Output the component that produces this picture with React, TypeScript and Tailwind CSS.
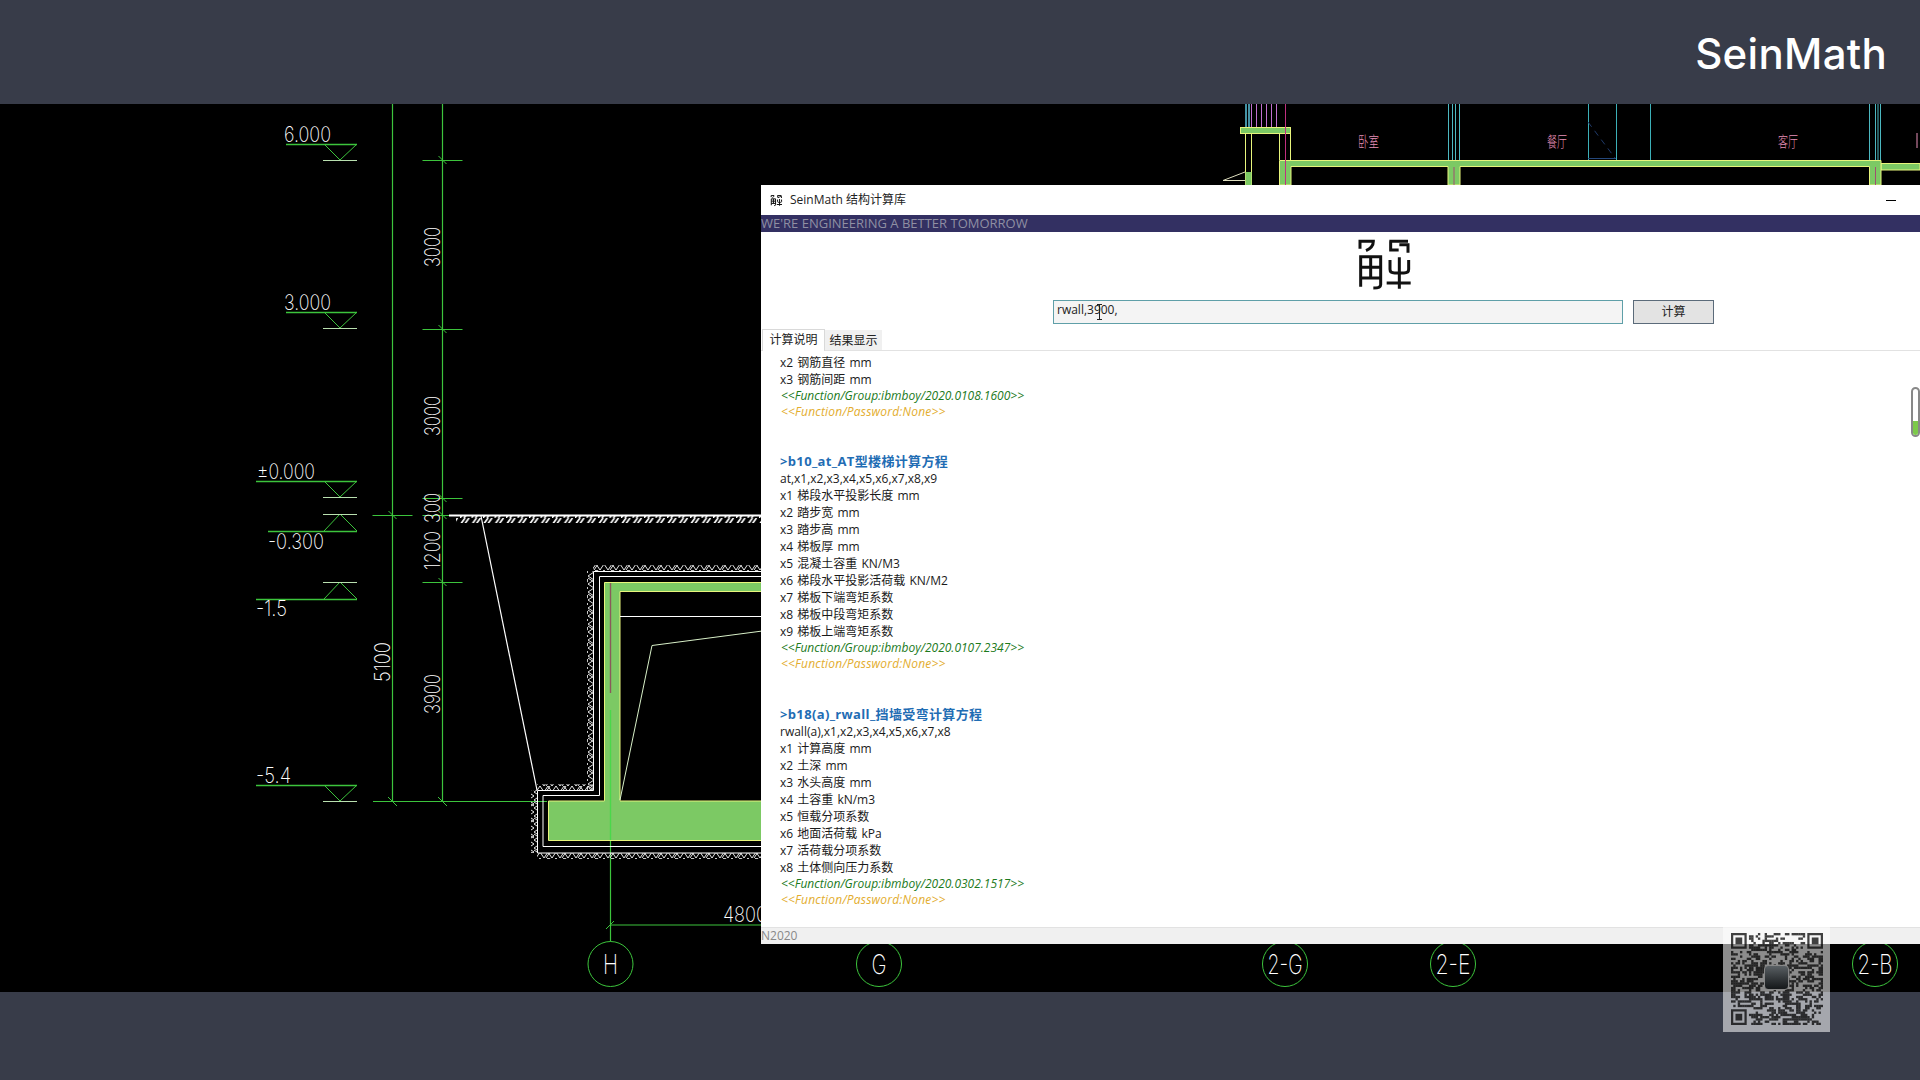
import React from 'react';

const uiFont = { fontFamily: '"Open Sans", "Noto Sans CJK SC", sans-serif' };
const LINE = '#3cc43c';
const WALL = '#7cc964';
const EDGE = '#e8f57c';

const CadText = ({x, y, w, size = 21, rot, children}: {x: number; y: number; w: number; size?: number; rot?: boolean; children: string}) => (
    <text x={x} y={y} textLength={w} lengthAdjust="spacingAndGlyphs" fontSize={size} fontWeight={200}
          fontFamily="Inter, sans-serif" fill="#fff" transform={rot ? `rotate(-90 ${x} ${y})` : undefined}>
        {children}
    </text>
);

// level marker: flat line + triangle, up=true when the point is at the top
const Level = ({y, left, up}: {y: number; left: number; up?: boolean}) => {
    const tip = up ? y - 17 : y + 16;
    return (
        <g fill="none" strokeWidth="1">
            <path d={`M${left} ${y + 0.5}H357`} stroke={LINE} strokeWidth="1.5"/>
            <path d={`M324 ${y}L340 ${tip}L357 ${y}`} stroke={LINE}/>
            <path d={`M323 ${tip + 0.5}H357`} stroke="#b9e0b0"/>
        </g>
    );
};

const Tick = ({x, y, half = 20}: {x: number; y: number; half?: number}) => (
    <g stroke={LINE}>
        <path d={`M${x - half} ${y + 0.5}H${x + half}`} strokeWidth="1.2"/>
        <path d={`M${x - 4} ${y - 4}L${x + 4} ${y + 4}`} strokeWidth="1"/>
    </g>
);

const Axis = ({x, label, w = 28}: {x: number; label: string; w?: number}) => (
    <g>
        <circle cx={x} cy={964} r={22.5} fill="#000" stroke={LINE} strokeWidth="1"/>
        <CadText x={x - w / 2} y={974} w={w} size={27}>{label}</CadText>
    </g>
);

const CadDrawing = () => (
    <svg className="w-full h-full block" viewBox="0 104 1920 888">
        <defs>
            <pattern id="groundHatch" width="11.5" height="7" patternUnits="userSpaceOnUse">
                <path d="M0 7L5 0M4 7L9 0" stroke="#fff" strokeWidth="1.7"/>
            </pattern>
            <pattern id="soilH" width="16" height="6" patternUnits="userSpaceOnUse">
                <path d="M0 6L4 0L8 6M8 6L12 0L16 6M2 6L6 0" stroke="#fff" strokeWidth="0.9" fill="none"/>
            </pattern>
            <pattern id="soilV" width="6" height="16" patternUnits="userSpaceOnUse">
                <path d="M0 0L6 4L0 8L6 12L0 16M0 2L6 6" stroke="#fff" strokeWidth="0.9" fill="none"/>
            </pattern>
        </defs>

        {/* dimension lines on the left */}
        <g stroke={LINE} strokeWidth="1.2">
            <path d="M392.5 104V801"/>
            <path d="M442.5 104V801"/>
            <path d="M373 801.5H547"/>
            <path d="M610.5 710V942"/>
            <path d="M610 925H770"/>
            <path d="M606 929L614 921" strokeWidth="1"/>
        </g>
        <Tick x={442.5} y={160}/>
        <Tick x={442.5} y={329}/>
        <Tick x={442.5} y={498}/>
        <Tick x={442.5} y={515}/>
        <Tick x={442.5} y={582}/>
        <Tick x={392.5} y={515}/>
        <path d="M388 797L397 806M438 797L447 806" stroke={LINE}/>

        <Level y={144} left={286}/>
        <Level y={312} left={286}/>
        <Level y={481} left={256}/>
        <Level y={531} left={268} up/>
        <Level y={599} left={256} up/>
        <Level y={785} left={256}/>

        <CadText x={284} y={142} w={47}>6.000</CadText>
        <CadText x={284} y={310} w={47}>3.000</CadText>
        <CadText x={257} y={479} w={58}>±0.000</CadText>
        <CadText x={268} y={549} w={56}>-0.300</CadText>
        <CadText x={256} y={616} w={31}>-1.5</CadText>
        <CadText x={256} y={783} w={35}>-5.4</CadText>

        <CadText x={440} y={267} w={40} rot>3000</CadText>
        <CadText x={440} y={436} w={40} rot>3000</CadText>
        <CadText x={440} y={523} w={30} rot>300</CadText>
        <CadText x={440} y={570} w={39} rot>1200</CadText>
        <CadText x={440} y={714} w={40} rot>3900</CadText>
        <CadText x={390} y={682} w={40} rot>5100</CadText>
        <CadText x={723} y={922} w={44}>4800</CadText>

        {/* ground line and soil */}
        <path d="M449 515.5H770" stroke="#fff" strokeWidth="2"/>
        <rect x="456" y="516" width="310" height="7" fill="url(#groundHatch)"/>
        <path d="M481 516L537 790" stroke="#fff" strokeWidth="1.2"/>

        {/* retaining wall section */}
        <rect x="593" y="565" width="175" height="6" fill="url(#soilH)"/>
        <rect x="587" y="571" width="6" height="219" fill="url(#soilV)"/>
        <rect x="537" y="784" width="56" height="6" fill="url(#soilH)"/>
        <rect x="531" y="790" width="6" height="63" fill="url(#soilV)"/>
        <rect x="537" y="853" width="230" height="6" fill="url(#soilH)"/>
        <path d="M770 571.5H593.5V790.5H537.5V853H770" fill="none" stroke="#fff" strokeWidth="1"/>
        <path d="M770 576.5H599.5V795.5H543V846.5H770" fill="none" stroke="#fff" strokeWidth="1"/>
        <path d="M770 582.5H604.5V801H548.5V840.5H770V801H620V591.5H770Z" fill={WALL} stroke={EDGE} strokeWidth="1"/>
        <path d="M604.5 801H620" stroke={WALL} strokeWidth="1"/>
        <path d="M610.5 583V693" stroke="#8a5a5a" strokeWidth="1.4"/>
        <path d="M610.5 710V840" stroke="#4ad84a" strokeWidth="1.4"/>
        <path d="M620 616.5H770" stroke="#fff" strokeWidth="1"/>
        <path d="M620 800L652 645.5L770 630" fill="none" stroke="#d8f0c8" strokeWidth="1"/>

        {/* plan fragment, top right */}
        <g fill="none" strokeWidth="1">
            <path d="M1251.5 104V127M1256.5 104V127M1261.5 104V127M1266.5 104V127M1271.5 104V127M1276.5 104V127" stroke="#c070d0"/>
            <path d="M1246 104V127M1249 104V127" stroke="#5cc4dc" strokeWidth="1.5"/>
            <path d="M1448.5 104V160M1452.5 104V160M1455.5 104V160M1459.5 104V160" stroke="#4cb8c0"/>
            <path d="M1869.5 104V160M1875.5 104V160M1878 104V160M1880.5 104V160" stroke="#4cb8c0"/>
            <path d="M1588.5 104V160M1616.5 104V160M1650.5 104V160" stroke="#3cb0b8"/>
            <path d="M1588 158.5H1616" stroke="#24477a"/>
            <path d="M1588 122L1615 158" stroke="#1f3a6a" strokeDasharray="6 5"/>
            <path d="M1223 180.5L1245 172M1223 180.5H1245" stroke="#e0e0c0"/>
            <path d="M1245.5 133V185M1251.5 133V185M1279.5 133V160M1290.5 133V160" stroke={EDGE}/>
        </g>
        <rect x="1240.5" y="127.5" width="50" height="6" fill={WALL} stroke={EDGE}/>
        <rect x="1245.5" y="172" width="6" height="13" fill={WALL}/>
        <rect x="1881" y="163.5" width="39" height="6.5" fill={WALL} stroke={EDGE}/>
        <path d="M1279.5 185V160.5H1881V185H1869.5V166.5H1460V185H1448V166.5H1291V185Z" fill={WALL} stroke={EDGE}/>
        <path d="M1285.5 104V185" stroke="#c03080" strokeWidth="1"/>
        <path d="M1454 167V185M1875.5 167V185" stroke="#a05070" strokeWidth="1"/>
        <g fontSize="15" fontWeight={300} fill="#e890b8" fontFamily='"Noto Sans CJK SC", sans-serif'>
            <text x="1358" y="147" textLength="21" lengthAdjust="spacingAndGlyphs">卧室</text>
            <text x="1547" y="147" textLength="20" lengthAdjust="spacingAndGlyphs">餐厅</text>
            <text x="1778" y="147" textLength="20" lengthAdjust="spacingAndGlyphs">客厅</text>
            <path d="M1917 133V148" stroke="#e890b8" strokeWidth="1"/>
        </g>

        {/* axis bubbles */}
        <Axis x={610.5} label="H" w={15}/>
        <Axis x={879} label="G" w={15}/>
        <Axis x={1285} label="2-G" w={35}/>
        <Axis x={1453} label="2-E" w={35}/>
        <Axis x={1875} label="2-B" w={35}/>
    </svg>
);

// small seal mark, used big under the banner and in the title bar
const SealLogo = ({className, weight = 9}: {className: string; weight?: number}) => (
    <svg className={className} viewBox="30 12 210 180" fill="none" stroke="#111" strokeWidth={weight}>
        <path d="M60 62V40H100C100 52 92 62 78 68"/>
        <path d="M62 176V86H122V170C122 178 114 180 100 180"/>
        <path d="M92 86V150M62 118H122M62 150H122"/>
        <path d="M148 40H204M152 40V66H176M178 50H204V74"/>
        <path d="M150 96V124C150 132 156 135 164 135H192C200 135 206 132 206 124V96"/>
        <path d="M178 88V182M140 165H212"/>
    </svg>
);

const QrCode = () => {
    const n = 41;
    const cells: React.ReactElement[] = [];
    let seed = 20200302;
    let prev = false;
    const next = () => {
        seed = (seed * 1664525 + 1013904223) % 4294967296;
        return seed / 4294967296;
    };
    const inFinder = (r: number, c: number) =>
        (r < 8 && c < 8) || (r < 8 && c >= n - 8) || (r >= n - 8 && c < 8);
    for (let r = 0; r < n; r++) {
        for (let c = 0; c < n; c++) {
            if (inFinder(r, c)) continue;
            prev = next() < (prev ? 0.65 : 0.38);
            if (prev) cells.push(<rect key={`${r}-${c}`} x={c} y={r} width="1.05" height="1.05"/>);
        }
    }
    const finder = (x: number, y: number) => (
        <g key={`${x}-${y}`}>
            <path fillRule="evenodd" d={`M${x} ${y}h7v7h-7zM${x + 1} ${y + 1}v5h5v-5z`}/>
            <rect x={x + 2} y={y + 2} width="3" height="3"/>
        </g>
    );
    return (
        <svg className="w-[92px] h-[92px]" viewBox="0 0 41 41" fill="#000" fillOpacity="0.74">
            {cells}
            {finder(0, 0)}
            {finder(n - 7, 0)}
            {finder(0, n - 7)}
        </svg>
    );
};

type Line = {kind: 'head' | 'text' | 'green' | 'gold'; text: string; gap?: string};

const lines: Line[] = [
    {kind: 'text', text: 'x2 钢筋直径 mm'},
    {kind: 'text', text: 'x3 钢筋间距 mm'},
    {kind: 'green', text: '<<Function/Group:ibmboy/2020.0108.1600>>'},
    {kind: 'gold', text: '<<Function/Password:None>>'},
    {kind: 'head', text: '>b10_at_AT型楼梯计算方程', gap: 'mt-[32px]'},
    {kind: 'text', text: 'at,x1,x2,x3,x4,x5,x6,x7,x8,x9'},
    {kind: 'text', text: 'x1 梯段水平投影长度 mm'},
    {kind: 'text', text: 'x2 踏步宽 mm'},
    {kind: 'text', text: 'x3 踏步高 mm'},
    {kind: 'text', text: 'x4 梯板厚 mm'},
    {kind: 'text', text: 'x5 混凝土容重 KN/M3'},
    {kind: 'text', text: 'x6 梯段水平投影活荷载 KN/M2'},
    {kind: 'text', text: 'x7 梯板下端弯矩系数'},
    {kind: 'text', text: 'x8 梯板中段弯矩系数'},
    {kind: 'text', text: 'x9 梯板上端弯矩系数'},
    {kind: 'green', text: '<<Function/Group:ibmboy/2020.0107.2347>>'},
    {kind: 'gold', text: '<<Function/Password:None>>'},
    {kind: 'head', text: '>b18(a)_rwall_挡墙受弯计算方程', gap: 'mt-[33px]'},
    {kind: 'text', text: 'rwall(a),x1,x2,x3,x4,x5,x6,x7,x8'},
    {kind: 'text', text: 'x1 计算高度 mm'},
    {kind: 'text', text: 'x2 土深 mm'},
    {kind: 'text', text: 'x3 水头高度 mm'},
    {kind: 'text', text: 'x4 土容重 kN/m3'},
    {kind: 'text', text: 'x5 恒载分项系数'},
    {kind: 'text', text: 'x6 地面活荷载 kPa'},
    {kind: 'text', text: 'x7 活荷载分项系数'},
    {kind: 'text', text: 'x8 土体侧向压力系数'},
    {kind: 'green', text: '<<Function/Group:ibmboy/2020.0302.1517>>'},
    {kind: 'gold', text: '<<Function/Password:None>>'},
];

const lineClass: Record<Line['kind'], string> = {
    head: 'h-[18px] leading-[18px] text-[13px] font-bold tracking-[0.35px] text-[#1f6db4]',
    text: 'h-[17px] leading-[17px] text-[12px] text-[#1a1a1a] [word-spacing:1px]',
    green: 'h-[16px] leading-[16px] text-[12px] italic text-[#1c7a1c] pl-[1px]',
    gold: 'h-[16px] leading-[16px] text-[12px] italic text-[#e3ad2e] pl-[1px] tracking-[0.2px]',
};

const CalcWindow = () => (
    <div className="absolute left-[761px] top-[81px] w-[1159px] h-[759px] bg-white flex flex-col overflow-hidden" style={uiFont}>
        <div className="h-[30px] flex items-center pl-[8px] gap-[6px] text-[12px] text-[#222]">
            <SealLogo className="w-[15px] h-[14px]" weight={14}/>
            <span>SeinMath 结构计算库</span>
            <div className="ml-auto mr-[24px] w-[10px] h-[1px] bg-black"/>
        </div>
        <div className="h-[17px] bg-[#333062] text-[13px] leading-[17px] text-[#8f8fa3] whitespace-nowrap">
            WE'RE ENGINEERING A BETTER TOMORROW
        </div>
        <div className="h-[68px] pl-[589px]">
            <SealLogo className="w-[70px] h-[60px]"/>
        </div>
        <div className="flex pl-[292px] gap-[10px]">
            <div className="relative w-[570px] h-[24px] bg-[#f4f4f4] border border-[#5f9fa8] pl-[3px] text-[12px] leading-[18px] text-[#222]">
                rwall,3900,
                <svg className="absolute left-[42px] top-[3px] w-[7px] h-[16px]" viewBox="0 0 7 16" fill="none" stroke="#222" strokeWidth="1">
                    <path d="M1 .5H6M3.5 .5V15.5M1 15.5H6"/>
                </svg>
            </div>
            <div className="w-[81px] h-[24px] bg-[#e3e3e3] border border-[#5b6b7a] flex items-center justify-center text-[12px] text-[#222]">
                计算
            </div>
        </div>
        <div className="mt-[5px] h-[22px] flex border-b border-[#e2e2e2] pl-[1px] text-[12px] text-[#222]">
            <div className="w-[63px] h-[22px] bg-white border border-b-0 border-[#d9d9d9] text-center leading-[20px]">计算说明</div>
            <div className="w-[57px] h-[20px] mt-[1px] bg-[#f0f0f0] text-center leading-[22px]">结果显示</div>
        </div>
        <div className="relative flex-1 pt-[3px] pl-[19px] overflow-hidden">
            {lines.map((l, i) => (
                <div key={i} className={`whitespace-nowrap ${lineClass[l.kind]} ${l.gap ?? ''}`}>
                    {l.text}
                </div>
            ))}
            <div className="absolute right-0 top-[36px] w-[9px] h-[50px] rounded-full border-2 border-[#888] bg-white flex flex-col justify-end">
                <div className="h-[14px] rounded-b-full bg-[#7cc94a]"/>
            </div>
        </div>
        <div className="h-[17px] bg-[#f0f0f0] border-t border-[#e2e2e2] text-[12px] leading-[16px] text-[#888]">N2020</div>
    </div>
);

const App = () => {
    return (
        <div className="flex flex-col w-[1920px] h-screen overflow-hidden bg-[#383c49]">
            <header className="h-[104px] flex items-center justify-end pr-[33px] pt-[2px]">
                <span className="text-[42px] font-medium tracking-[0.3px] text-white" style={{fontFamily: 'Inter, sans-serif'}}>SeinMath</span>
            </header>
            <main className="relative h-[888px] bg-black">
                <CadDrawing/>
                <CalcWindow/>
                <div className="absolute left-[1723px] top-[821px] w-[107px] h-[107px] bg-white/55 flex items-center justify-center">
                    <QrCode/>
                    <div className="absolute left-[41px] top-[40px] w-[25px] h-[25px] rounded-[4px] border border-[#888] bg-gradient-to-b from-[#5a6064] to-[#15181a]"/>
                </div>
            </main>
            <footer className="flex-1"/>
        </div>
    );
};

export default App;
